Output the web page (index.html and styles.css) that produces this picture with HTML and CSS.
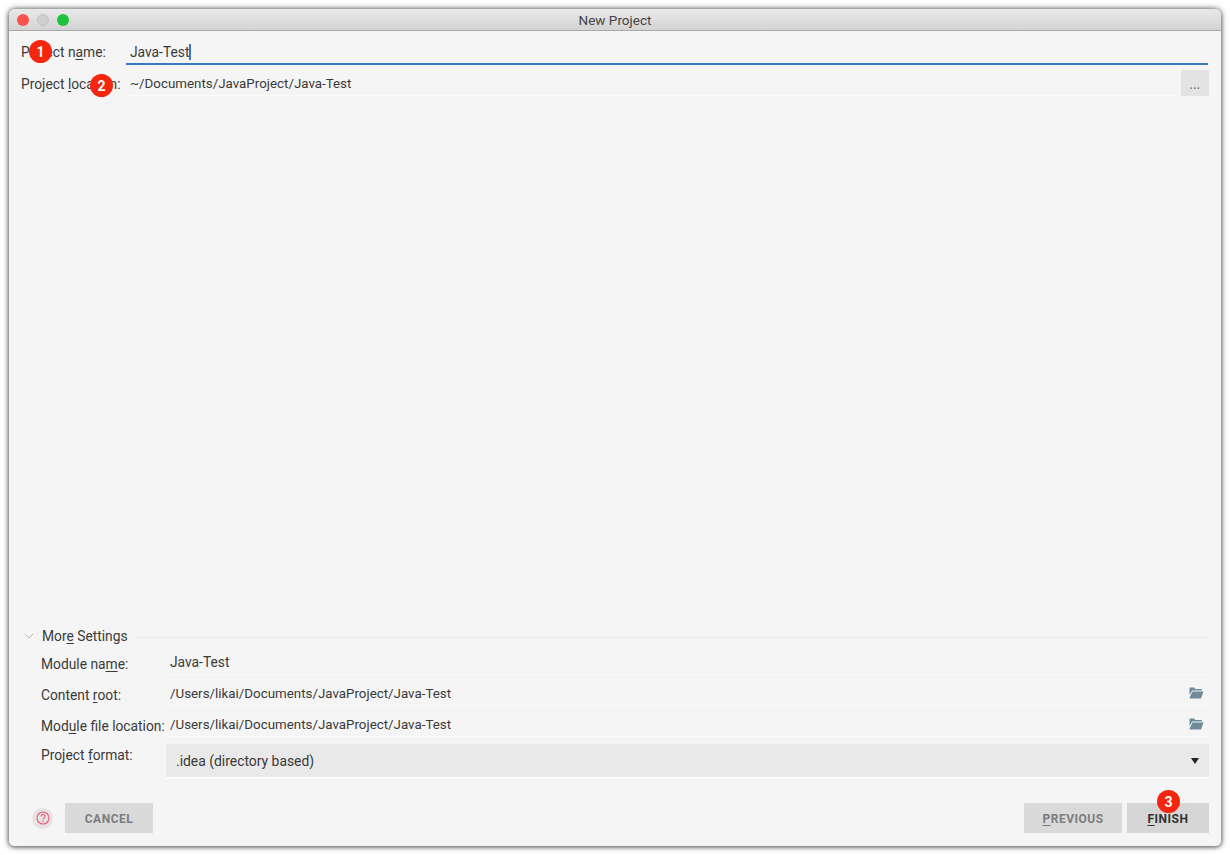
FILE: index.html
```html
<!DOCTYPE html>
<html lang="en">
<head>
<meta charset="utf-8">
<title>New Project</title>
<link rel="stylesheet" href="styles.css">
</head>
<body>
<div class="window">
  <header class="titlebar">
    <div class="lights"><span class="light red"></span><span class="light grey"></span><span class="light green"></span></div>
    <div class="title">New Project</div>
  </header>
  <main class="content">
    <div class="top-form">
      <div class="row name-row">
        <label class="top-label">Project n<u>a</u>me:</label>
        <div class="field active"><span>Java-Test</span><i class="caret"></i></div>
      </div>
      <div class="row location-row">
        <label class="top-label">Project <u>l</u>ocation:</label>
        <div class="field plain"><span>~/Documents/JavaProject/Java-Test</span></div>
        <button class="browse" type="button">...</button>
      </div>
    </div>
    <div class="spacer"></div>
    <section class="more">
      <div class="more-head">
        <svg class="chevron" width="10" height="6" viewBox="0 0 10 6"><path d="M1 1l4 4 4-4" fill="none" stroke="#b4b4b4" stroke-width="1"/></svg>
        <span class="more-title">Mor<u>e</u> Settings</span>
        <span class="more-line"></span>
      </div>
      <div class="mrow">
        <label class="mlabel">Module na<u>m</u>e:</label>
        <div class="mfield"><span class="short">Java-Test</span></div>
      </div>
      <div class="mrow">
        <label class="mlabel">Content <u>r</u>oot:</label>
        <div class="mfield"><span>/Users/likai/Documents/JavaProject/Java-Test</span>
          <svg class="folder" width="15" height="12" viewBox="0 0 15 12"><path d="M0.5 1.5a1 1 0 0 1 1-1h3.5l1.3 1.5h5.7a1 1 0 0 1 1 1v0.5H3.2L0.5 8z" fill="#6f8a9a"/><path d="M3.5 4.6h11l-2.3 6.3a.7.7 0 0 1-.7.5H1.2a.6.6 0 0 1-.6-.8z" fill="#6f8a9a"/></svg>
        </div>
      </div>
      <div class="mrow">
        <label class="mlabel">Mod<u>u</u>le file location:</label>
        <div class="mfield"><span>/Users/likai/Documents/JavaProject/Java-Test</span>
          <svg class="folder" width="15" height="12" viewBox="0 0 15 12"><path d="M0.5 1.5a1 1 0 0 1 1-1h3.5l1.3 1.5h5.7a1 1 0 0 1 1 1v0.5H3.2L0.5 8z" fill="#6f8a9a"/><path d="M3.5 4.6h11l-2.3 6.3a.7.7 0 0 1-.7.5H1.2a.6.6 0 0 1-.6-.8z" fill="#6f8a9a"/></svg>
        </div>
      </div>
      <div class="mrow format-row">
        <label class="mlabel">Project <u>f</u>ormat:</label>
        <div class="select"><span>.idea (directory based)</span><i class="arrow"></i></div>
      </div>
    </section>
    <footer class="actions">
      <div class="help"><svg width="14" height="14" viewBox="0 0 14 14"><circle cx="7" cy="7" r="6" fill="none" stroke="#ea5b78" stroke-width="1.1"/><path d="M5 5.4a2 2 0 1 1 3.1 1.7C7.3 7.6 7 8 7 8.8" fill="none" stroke="#ea5b78" stroke-width="1.1"/><circle cx="7" cy="10.5" r=".7" fill="#ea5b78"/></svg></div>
      <button class="btn cancel" type="button">CANCEL</button>
      <div class="grow"></div>
      <button class="btn previous" type="button"><u>P</u>REVIOUS</button>
      <button class="btn finish" type="button"><u>F</u>INISH</button>
    </footer>
  </main>
  <span class="badge b1">1</span>
  <span class="badge b2">2</span>
  <span class="badge b3">3</span>
</div>
</body>
</html>
```
FILE: styles.css
```css
* { box-sizing: border-box; }
html, body { margin: 0; height: 100%; }
body {
  background: #fff;
  padding: 9px 9px 8px;
  font-family: Roboto, "Liberation Sans", sans-serif;
  font-size: 13.35px;
  color: #3a3a3a;
}
u { text-underline-offset: 2px; text-decoration-thickness: 1px; }
.window {
  position: relative;
  height: 837px;
  display: flex;
  flex-direction: column;
  background: #f5f5f5;
  border-radius: 6px 6px 5px 5px;
  box-shadow: 0 0 6px rgba(0,0,0,.6), 0 1px 4px rgba(0,0,0,.4);
}
.titlebar {
  position: relative;
  height: 22px;
  flex: none;
  display: flex;
  align-items: center;
  justify-content: center;
  background: linear-gradient(#e9e9e9, #d3d3d3);
  border-bottom: 1px solid #a9a9a9;
  border-radius: 6px 6px 0 0;
}
.lights { position: absolute; left: 8px; top: 5px; display: flex; gap: 8px; }
.light { width: 12px; height: 12px; border-radius: 50%; }
.red { background: #f9524e; }
.grey { background: #cfcfcf; border: 1px solid #c0c0c0; }
.green { background: #20c23d; }
.title { font-size: 13.5px; color: #444; padding-top: 1px; }
.content { flex: 1; display: flex; flex-direction: column; padding: 0 12px 13px; min-height: 0; }
.top-form { display: flex; flex-direction: column; }
.row { display: flex; }
.name-row { height: 34px; margin-right: 1px; }
.location-row { height: 31px; margin-top: 5px; }
.top-label { width: 105px; flex: none; line-height: 16px; padding-top: 13px; font-size: 13.8px; white-space: nowrap; }
.location-row .top-label { padding-top: 6px; }
.field { flex: 1; padding-left: 4px; display: flex; align-items: flex-start; }
.field span { line-height: 16px; }
.active { border-bottom: 2px solid #3b78c4; padding-top: 13px; font-size: 13.8px; }
.plain { border-bottom: 1px solid #fbfbfb; padding-top: 6px; height: 26px; }
.caret { width: 2px; height: 16px; background: #3b78c4; margin-left: 0; }
.browse {
  width: 28px; height: 26px; margin-left: 1px; border: 0; padding: 4px 0 0;
  background: #e3e3e3; color: #777; font: 700 11px Roboto, sans-serif; letter-spacing: .5px;
}
.spacer { flex: 1; }
.more { display: flex; flex-direction: column; }
.more-head { display: flex; align-items: center; height: 16px; padding-left: 3px; margin-bottom: 3px; }
.chevron { flex: none; margin-right: 8px; }
.more-title { white-space: nowrap; font-size: 13.8px; }
.more-line { flex: 1; height: 1px; background: #e9e9e9; margin-left: 8px; margin-top: 2px; }
.mrow { display: flex; height: 31px; padding-left: 20px; }
.mlabel { width: 127px; flex: none; white-space: nowrap; line-height: 16px; padding-top: 9px; font-size: 13.8px; }
.mfield {
  flex: 1; height: 28px; padding: 4px 5px 0 2px;
  display: flex; justify-content: space-between; align-items: flex-start;
  border-bottom: 1px solid #fbfbfb;
}
.mfield span { line-height: 16px; padding-top: 4px; }
.mfield .short { font-size: 13.8px; padding-top: 3px; }
.mfield .folder { margin-top: 5px; }
.format-row { height: 43px; margin-top: -4px; }
.format-row .mlabel { padding-top: 11px; }
.select {
  flex: 1; margin: 8px 0 0 -2px; height: 35px; padding: 2px 10px 2px 10px;
  display: flex; justify-content: space-between; align-items: center;
  background: #e9e9e9; border-bottom: 2px solid #fbfbfb; font-size: 13.9px;
}
.arrow { width: 0; height: 0; border: 4px solid transparent; border-top: 6px solid #222; border-bottom: 0; }
.actions { display: flex; align-items: center; margin-top: 24px; height: 30px; padding-left: 10px; }
.help {
  width: 21px; height: 21px; border-radius: 50%; background: #e4e4e4;
  display: flex; align-items: center; justify-content: center; margin: 0 12px 0 1px;
}
.btn {
  height: 30px; border: 0; padding: 1px 0 0; background: #dadada; color: #7d7d7d;
  font: 700 12px Roboto, sans-serif; letter-spacing: .5px;
}
.cancel { width: 88px; }
.grow { flex: 1; }
.previous { width: 98px; margin-right: 5px; }
.finish { width: 82px; color: #333; background: #d6d6d6; }
.badge {
  position: absolute; width: 23px; height: 23px; border-radius: 50%;
  background: #f5260f; color: #fff; font-size: 14px; font-weight: 700;
  display: flex; align-items: center; justify-content: center;
}
.b1 { left: 20px; top: 31px; }
.b2 { left: 81px; top: 65px; }
.b3 { left: 1148px; top: 781px; }
```
